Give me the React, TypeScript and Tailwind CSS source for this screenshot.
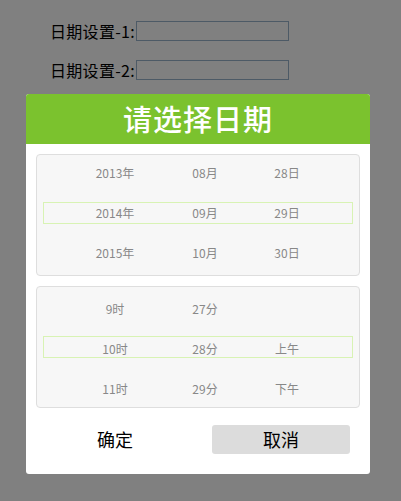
const CJK = { fontFamily: '"Noto Sans CJK SC", "Liberation Sans", sans-serif' };

const dateRows = [
  ['2013年', '08月', '28日'],
  ['2014年', '09月', '29日'],
  ['2015年', '10月', '30日'],
];

const timeRows = [
  ['9时', '27分', ''],
  ['10时', '28分', '上午'],
  ['11时', '29分', '下午'],
];

function Wheel({ rows, time = false }: { rows: string[][]; time?: boolean }) {
  return (
    <div className="relative h-[122px] rounded-[4px] border border-[#dedede] bg-[#f7f7f7] overflow-hidden">
      {/* selected row */}
      <div
        className={`absolute left-[6px] right-[6px] h-[22px] border border-[#d8f3b4] ${
          time ? 'top-[49px]' : 'top-[47px]'
        }`}
      />
      <div className={`relative flex flex-col pl-[33px] ${time ? 'mt-[2px]' : '-mt-[2px]'}`}>
        {rows.map((row, i) => (
          <div key={i} className="flex h-[40px] items-center text-[12px] text-[#888]">
            <span className="w-[90px] text-center">{row[0]}</span>
            <span className="w-[90px] text-center">{row[1]}</span>
            <span className="w-[74px] text-center">{row[2]}</span>
          </div>
        ))}
      </div>
    </div>
  );
}

function DateField({ label }: { label: string }) {
  return (
    <div className="flex items-center h-[20px]">
      <span className="w-[86px] text-[16px] leading-none text-black tracking-[0.3px]">{label}</span>
      <div className="w-[153px] h-[20px] border border-[#4d5a66]" />
    </div>
  );
}

export default function App() {
  return (
    <div className="w-[401px] h-[501px] bg-[#808080] overflow-hidden" style={CJK}>
      <div className="flex flex-col gap-[19px] pl-[50px] pt-[21px]">
        <DateField label="日期设置-1:" />
        <DateField label="日期设置-2:" />
      </div>

      <div className="ml-[26px] mt-[14px] w-[344px] rounded-[3px] bg-white overflow-hidden">
        <div className="h-[50px] bg-[#7bc22e] flex items-center justify-center text-white text-[29px] font-medium tracking-[1px]">
          请选择日期
        </div>

        <div className="flex flex-col gap-[10px] px-[10px] pt-[10px]">
          <Wheel rows={dateRows} />
          <Wheel rows={timeRows} time />
        </div>

        <div className="flex gap-[28px] px-[20px] pt-[17px] pb-[20px]">
          <button className="w-[138px] h-[29px] rounded-[3px] bg-white text-[18px] text-black">
            确定
          </button>
          <button className="w-[138px] h-[29px] rounded-[3px] bg-[#dcdcdc] text-[18px] text-black">
            取消
          </button>
        </div>
      </div>
    </div>
  );
}
